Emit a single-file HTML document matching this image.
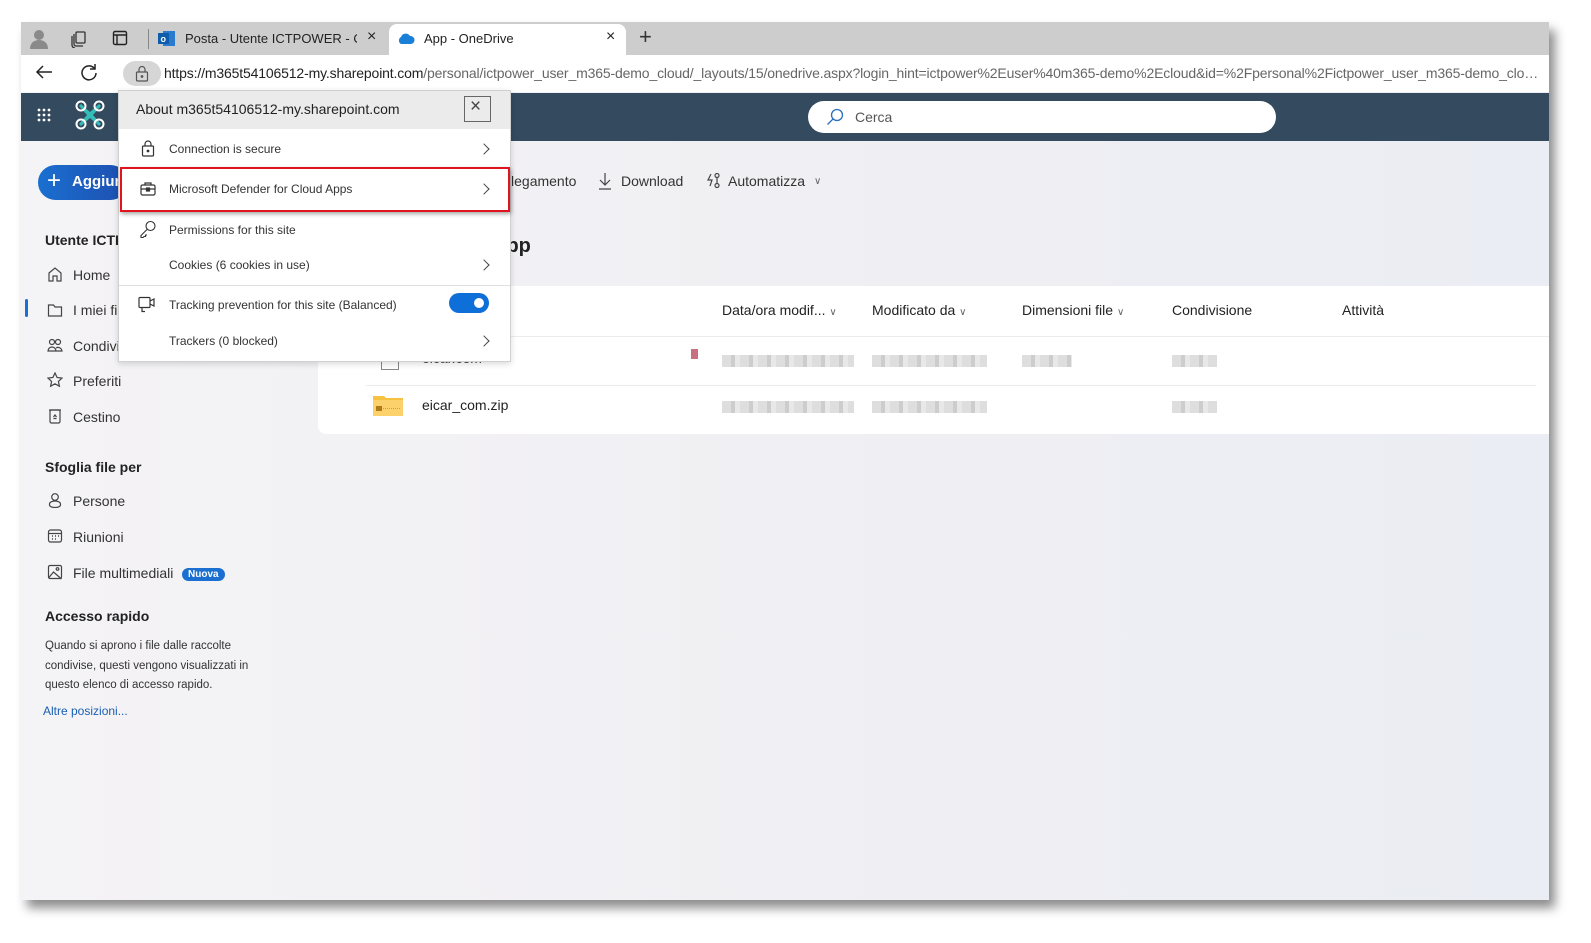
<!DOCTYPE html>
<html><head><meta charset="utf-8"><style>
*{box-sizing:border-box;margin:0;padding:0}
body{width:1591px;height:943px;background:#fff;font-family:"Liberation Sans",sans-serif;position:relative;overflow:hidden;color:#242424}
.win{position:absolute;left:21px;top:22px;width:1528px;height:878px;background:linear-gradient(90deg,#f4f3f5,#f0eff3 50%,#eaedf3);box-shadow:6px 8px 10px rgba(0,0,0,.45);overflow:hidden}
.abs{position:absolute}
.tabbar{left:0;top:0;width:100%;height:33px;background:#cdcdcd}
.addr{left:0;top:33px;width:100%;height:37px;background:#fff}
.hdr{left:0;top:71px;width:100%;height:48px;background:#344a5e}
.t{position:absolute;white-space:nowrap}
.pop{left:97px;top:68px;width:393px;height:272px;background:#fff;border:1px solid #d0d0d0;box-shadow:0 2px 6px rgba(0,0,0,.15);font-size:12px;color:#333}
.chev{position:absolute;right:22px;width:8px;height:8px;border-right:1.3px solid #444;border-top:1.3px solid #444;transform:rotate(45deg)}
.nav{font-size:14px;color:#333}
.card{left:297px;top:264px;width:1240px;height:148px;background:#fff;border-radius:8px}
.blur{position:absolute;height:12px;background:repeating-linear-gradient(90deg,#d8d8d8 0 9px,#c4c4c4 9px 13px,#e4e4e4 13px 18px);opacity:.85}
.dd{font-size:10px;color:#666}
</style></head><body>
<div class="win">
 <div class="abs tabbar"></div>
 <svg class="abs" style="left:8px;top:6px" width="20" height="22"><circle cx="10" cy="7" r="5" fill="#8a8a8a"/><path d="M1 21c0-6 4-9 9-9s9 3 9 9z" fill="#8a8a8a"/></svg>
 <svg class="abs" style="left:49px;top:8px" width="18" height="18" fill="none" stroke="#333" stroke-width="1.3"><rect x="6" y="2" width="9" height="11" rx="1"/><path d="M4 4v10a2 2 0 0 0 2 2h7"/><path d="M2 6v9a3 3 0 0 0 3 3"/></svg>
 <svg class="abs" style="left:91px;top:8px" width="16" height="16" fill="none" stroke="#222" stroke-width="1.4"><rect x="1.5" y="1.5" width="13" height="13" rx="1.5"/><path d="M1.5 5h13M5 5v9.5"/></svg>
 <div class="abs" style="left:127px;top:7px;width:1px;height:20px;background:#888"></div>
 <svg class="abs" style="left:137px;top:8px" width="18" height="17"><rect x="5" y="1" width="12" height="15" fill="#2a7ad0"/><rect x="0" y="3" width="11" height="11" fill="#0f5cab"/><text x="2.5" y="12" font-size="9" fill="#fff" font-family="Liberation Sans" font-weight="bold">o</text></svg>
 <div class="t" style="left:164px;top:9px;font-size:13px;color:#222;width:172px;overflow:hidden">Posta - Utente ICTPOWER - Outlook</div>
 <div class="t" style="left:346px;top:6px;font-size:16px;color:#222">×</div>
 <div class="abs" style="left:368px;top:2px;width:237px;height:33px;background:#fff;border-radius:8px 8px 0 0"></div>
 <svg class="abs" style="left:376px;top:10px" width="18" height="13"><path d="M4 12a4 4 0 0 1 0-7 5 5 0 0 1 9-1 4 4 0 0 1 1 8z" fill="#1a7fd6"/></svg>
 <div class="t" style="left:403px;top:9px;font-size:13px;color:#222">App - OneDrive</div>
 <div class="t" style="left:585px;top:6px;font-size:16px;color:#222">×</div>
 <div class="t" style="left:618px;top:2px;font-size:22px;color:#333;font-weight:300">+</div>
 <div class="abs addr"></div>
 <svg class="abs" style="left:14px;top:42px" width="18" height="16" fill="none" stroke="#222" stroke-width="1.5"><path d="M17 8H2M8 2L2 8l6 6"/></svg>
 <svg class="abs" style="left:59px;top:41px" width="18" height="18" fill="none" stroke="#222" stroke-width="1.5"><path d="M14.5 5.5A7 7 0 1 0 16 10"/><path d="M15 1v5h-5"/></svg>
 <div class="abs" style="left:102px;top:39px;width:38px;height:25px;background:#d6d6d6;border-radius:13px"></div>
 <svg class="abs" style="left:114px;top:43px" width="14" height="17" fill="none" stroke="#555" stroke-width="1.2"><rect x="1.5" y="7" width="11" height="9" rx="1"/><path d="M4 7V4.5a3 3 0 0 1 6 0V7"/><circle cx="7" cy="11.5" r=".8" fill="#555"/></svg>
 <div class="t" style="left:143px;top:43px;font-size:14px;color:#666;width:1375px;overflow:hidden;text-overflow:ellipsis;letter-spacing:-.15px"><span style="color:#222">https://m365t54106512-my.sharepoint.com</span>/personal/ictpower_user_m365-demo_cloud/_layouts/15/onedrive.aspx?login_hint=ictpower%2Euser%40m365-demo%2Ecloud&amp;id=%2Fpersonal%2Fictpower_user_m365-demo_cloud%2FDocuments%2FApp</div>
 <div class="abs hdr"></div>
 <svg class="abs" style="left:16px;top:86px" width="15" height="15" fill="#fff"><circle cx="2" cy="2" r="1.4"/><circle cx="7" cy="2" r="1.4"/><circle cx="12" cy="2" r="1.4"/><circle cx="2" cy="7" r="1.4"/><circle cx="7" cy="7" r="1.4"/><circle cx="12" cy="7" r="1.4"/><circle cx="2" cy="12" r="1.4"/><circle cx="7" cy="12" r="1.4"/><circle cx="12" cy="12" r="1.4"/></svg>
 <svg class="abs" style="left:54px;top:78px" width="30" height="30"><path d="M6 4l9 8 9-8 2 2-8 9 8 9-2 2-9-8-9 8-2-2 8-9-8-9z" fill="#35bdb8"/><g fill="none" stroke="#fff" stroke-width="2"><circle cx="6" cy="6" r="4.5"/><circle cx="24" cy="6" r="4.5"/><circle cx="6" cy="24" r="4.5"/><circle cx="24" cy="24" r="4.5"/></g></svg>
 <div class="abs" style="left:787px;top:79px;width:468px;height:32px;background:#fff;border-radius:16px"></div>
 <svg class="abs" style="left:805px;top:86px" width="18" height="18" fill="none" stroke="#2a6fc0" stroke-width="1.3"><circle cx="11" cy="7" r="5.5"/><path d="M7 11l-5.5 5.5"/></svg>
 <div class="t" style="left:834px;top:87px;font-size:14px;color:#555">Cerca</div>

 <div class="abs" style="left:17px;top:143px;width:90px;height:35px;background:linear-gradient(90deg,#1a6fd0,#1e4fb0);border-radius:18px"></div>
 <div class="t" style="left:26px;top:145px;font-size:24px;color:#fff;font-weight:300">+</div>
 <div class="t" style="left:51px;top:151px;font-size:15px;color:#fff;font-weight:bold">Aggiungi</div>
 <div class="t nav" style="left:24px;top:210px;font-weight:bold;font-size:14px;color:#222">Utente ICTPOWER</div>
 <div class="t nav" style="left:52px;top:245px">Home</div>
 <div class="abs" style="left:4px;top:277px;width:3px;height:18px;background:#1a6fd0;border-radius:2px"></div>
 <div class="t nav" style="left:52px;top:280px">I miei file</div>
 <div class="t nav" style="left:52px;top:316px">Condivisi</div>
 <div class="t nav" style="left:52px;top:351px">Preferiti</div>
 <div class="t nav" style="left:52px;top:387px">Cestino</div>
 <svg class="abs" style="left:26px;top:244px" width="16" height="16" fill="none" stroke="#444" stroke-width="1.2"><path d="M2 7l6-5 6 5v8h-4v-5H6v5H2z"/></svg>
 <svg class="abs" style="left:26px;top:280px" width="16" height="16" fill="none" stroke="#444" stroke-width="1.2"><path d="M1.5 3h5l1.5 2h6.5v9h-13z"/></svg>
 <svg class="abs" style="left:26px;top:315px" width="16" height="16" fill="none" stroke="#444" stroke-width="1.2"><circle cx="5" cy="5" r="2.5"/><circle cx="11" cy="5" r="2.5"/><path d="M1 14a4 4 0 0 1 8 0zM9 14h6a4 4 0 0 0-6-3"/></svg>
 <svg class="abs" style="left:26px;top:350px" width="16" height="16" fill="none" stroke="#444" stroke-width="1.2"><path d="M8 1l2.1 4.5 4.9.6-3.6 3.3 1 4.8L8 11.8 3.6 14.2l1-4.8L1 6.1l4.9-.6z"/></svg>
 <svg class="abs" style="left:26px;top:386px" width="16" height="16" fill="none" stroke="#444" stroke-width="1.2"><rect x="3" y="2" width="10" height="13" rx="1.5"/><path d="M2 2h12"/><path d="M6.5 9l1.5-2 1.5 2M6.5 10.5h3"/></svg>
 <div class="t" style="left:24px;top:437px;font-size:14px;font-weight:bold;color:#222">Sfoglia file per</div>
 <div class="t nav" style="left:52px;top:471px">Persone</div>
 <div class="t nav" style="left:52px;top:507px">Riunioni</div>
 <div class="t nav" style="left:52px;top:543px">File multimediali</div>
 <svg class="abs" style="left:26px;top:470px" width="16" height="16" fill="none" stroke="#444" stroke-width="1.2"><circle cx="8" cy="5" r="3.3"/><path d="M2.5 12a5.5 3 0 0 1 11 0v1a5.5 2.5 0 0 1-11 0z"/></svg>
 <svg class="abs" style="left:26px;top:506px" width="16" height="16" fill="none" stroke="#444" stroke-width="1.2"><rect x="1.5" y="2" width="13" height="12" rx="2"/><path d="M1.5 5.5h13"/><path d="M5 8h1M8 8h1M11 8h1M5 11h1M8 11h1" stroke-width="1.6"/></svg>
 <svg class="abs" style="left:26px;top:542px" width="16" height="16" fill="none" stroke="#444" stroke-width="1.2"><rect x="1.5" y="1.5" width="13" height="13" rx="1.5"/><circle cx="10.5" cy="5" r="1.3"/><path d="M1.5 14l5-6 8 7"/></svg>
 <div class="t" style="left:161px;top:546px;font-size:10px;font-weight:bold;color:#fff;background:#1a6fd0;border-radius:8px;padding:1px 6px">Nuova</div>
 <div class="t" style="left:24px;top:586px;font-size:14px;font-weight:bold;color:#222">Accesso rapido</div>
 <div class="t" style="left:24px;top:615px;font-size:11.5px;color:#333;line-height:19.5px">Quando si aprono i file dalle raccolte<br>condivise, questi vengono visualizzati in<br>questo elenco di accesso rapido.</div>
 <div class="t" style="left:22px;top:682px;font-size:12px;color:#1a5fb4">Altre posizioni...</div>

 <div class="t" style="left:469px;top:151px;font-size:14px;color:#333">Collegamento</div>
 <svg class="abs" style="left:577px;top:150px" width="14" height="18" fill="none" stroke="#444" stroke-width="1.2"><path d="M7 1v12M2 8l5 5 5-5M1 17h12"/></svg>
 <div class="t" style="left:600px;top:151px;font-size:14px;color:#333">Download</div>
 <svg class="abs" style="left:684px;top:150px" width="17" height="17" fill="none" stroke="#444" stroke-width="1.2"><path d="M6 2L3 8h4l-2 6"/><circle cx="12" cy="3.5" r="2"/><circle cx="12" cy="13.5" r="2"/><path d="M12 5.5v6"/></svg>
 <div class="t" style="left:707px;top:151px;font-size:14px;color:#333">Automatizza</div>
 <div class="t dd" style="left:793px;top:154px">&#8744;</div>
 <div class="t" style="left:471px;top:213px;font-size:20px;color:#222;font-weight:bold">App</div>

 <div class="abs card"></div>
 <div class="t" style="left:701px;top:280px;font-size:14px;color:#222">Data/ora modif... <span class="dd">&#8744;</span></div>
 <div class="t" style="left:851px;top:280px;font-size:14px;color:#222">Modificato da <span class="dd">&#8744;</span></div>
 <div class="t" style="left:1001px;top:280px;font-size:14px;color:#222">Dimensioni file <span class="dd">&#8744;</span></div>
 <div class="t" style="left:1151px;top:280px;font-size:14px;color:#222">Condivisione</div>
 <div class="t" style="left:1321px;top:280px;font-size:14px;color:#222">Attività</div>
 <div class="abs" style="left:297px;top:314px;width:1240px;height:1px;background:#ececec"></div>
 <div class="abs" style="left:360px;top:332px;width:18px;height:16px;border:1.3px solid #888;border-top:none"></div>
 <div class="t" style="left:401px;top:328px;font-size:14px;color:#444">eicar.com</div>
 <div class="abs" style="left:670px;top:327px;width:7px;height:10px;background:#c87080"></div>
 <div class="blur" style="left:701px;top:333px;width:132px"></div>
 <div class="blur" style="left:851px;top:333px;width:115px"></div>
 <div class="blur" style="left:1001px;top:333px;width:50px"></div>
 <div class="blur" style="left:1151px;top:333px;width:45px"></div>
 <div class="abs" style="left:345px;top:363px;width:1170px;height:1px;background:#ececec"></div>
 <svg class="abs" style="left:352px;top:372px" width="30" height="22"><path d="M0 2h11l2 2h17v18H0z" fill="#f5c242"/><rect x="0" y="6" width="30" height="16" fill="#fcd16c"/><rect x="3" y="12" width="6" height="5" fill="#b27a16"/><path d="M10 14.5h18" stroke="#d9a030" stroke-dasharray="1 1"/></svg>
 <div class="t" style="left:401px;top:375px;font-size:14px;color:#222">eicar_com.zip</div>
 <div class="blur" style="left:701px;top:379px;width:132px"></div>
 <div class="blur" style="left:851px;top:379px;width:115px"></div>
 <div class="blur" style="left:1151px;top:379px;width:45px"></div>

 <div class="abs pop">
  <div class="abs" style="left:0;top:0;width:391px;height:38px;background:#ebebeb"></div>
  <div class="t" style="left:17px;top:10px;font-size:14px;color:#222">About m365t54106512-my.sharepoint.com</div>
  <div class="abs" style="left:345px;top:5px;width:27px;height:26px;border:1.5px solid #666"></div>
  <div class="t" style="left:351px;top:5px;font-size:19px;color:#444">×</div>
  <svg class="abs" style="left:22px;top:49px" width="14" height="17" fill="none" stroke="#333" stroke-width="1.2"><rect x="1.5" y="6" width="11" height="10" rx="1"/><path d="M4 6V4a3 3 0 0 1 6 0v2"/><circle cx="7" cy="11" r=".8" fill="#333"/></svg>
  <div class="t" style="left:50px;top:51px">Connection is secure</div>
  <div class="chev" style="top:54px"></div>
  <svg class="abs" style="left:21px;top:90px" width="16" height="15" fill="none" stroke="#333" stroke-width="1.2"><rect x="1" y="4" width="14" height="10" rx="1.5"/><path d="M5 4V2h6v2M1 8h14"/><rect x="6.5" y="7" width="3" height="3" fill="#333"/></svg>
  <div class="t" style="left:50px;top:91px">Microsoft Defender for Cloud Apps</div>
  <div class="chev" style="top:94px"></div>
  <svg class="abs" style="left:20px;top:129px" width="18" height="18" fill="none" stroke="#333" stroke-width="1.1"><circle cx="11.5" cy="6" r="4.5"/><path d="M8 9.5L2 15.5v2h2l1-1h1.5v-1.5H8"/></svg>
  <div class="t" style="left:50px;top:132px">Permissions for this site</div>
  <div class="t" style="left:50px;top:167px">Cookies (6 cookies in use)</div>
  <div class="chev" style="top:170px"></div>
  <div class="abs" style="left:0;top:194px;width:391px;height:1px;background:#e0e0e0"></div>
  <svg class="abs" style="left:19px;top:205px" width="18" height="17" fill="none" stroke="#333" stroke-width="1.2"><rect x="1" y="1.5" width="11" height="10" rx="1"/><path d="M12 5l4-2v7l-4-2M4 11.5v4h3"/></svg>
  <div class="t" style="left:50px;top:207px">Tracking prevention for this site (Balanced)</div>
  <div class="abs" style="left:330px;top:202px;width:40px;height:20px;background:#0f6fd8;border-radius:10px"></div>
  <div class="abs" style="left:355px;top:207px;width:10px;height:10px;background:#fff;border-radius:50%"></div>
  <div class="t" style="left:50px;top:243px">Trackers (0 blocked)</div>
  <div class="chev" style="top:246px"></div>
 </div>
 <div class="abs" style="left:99px;top:145px;width:390px;height:45px;border:2px solid #e0141e;box-shadow:1px 2px 4px rgba(0,0,0,.35)"></div>
</div>
</body></html>
